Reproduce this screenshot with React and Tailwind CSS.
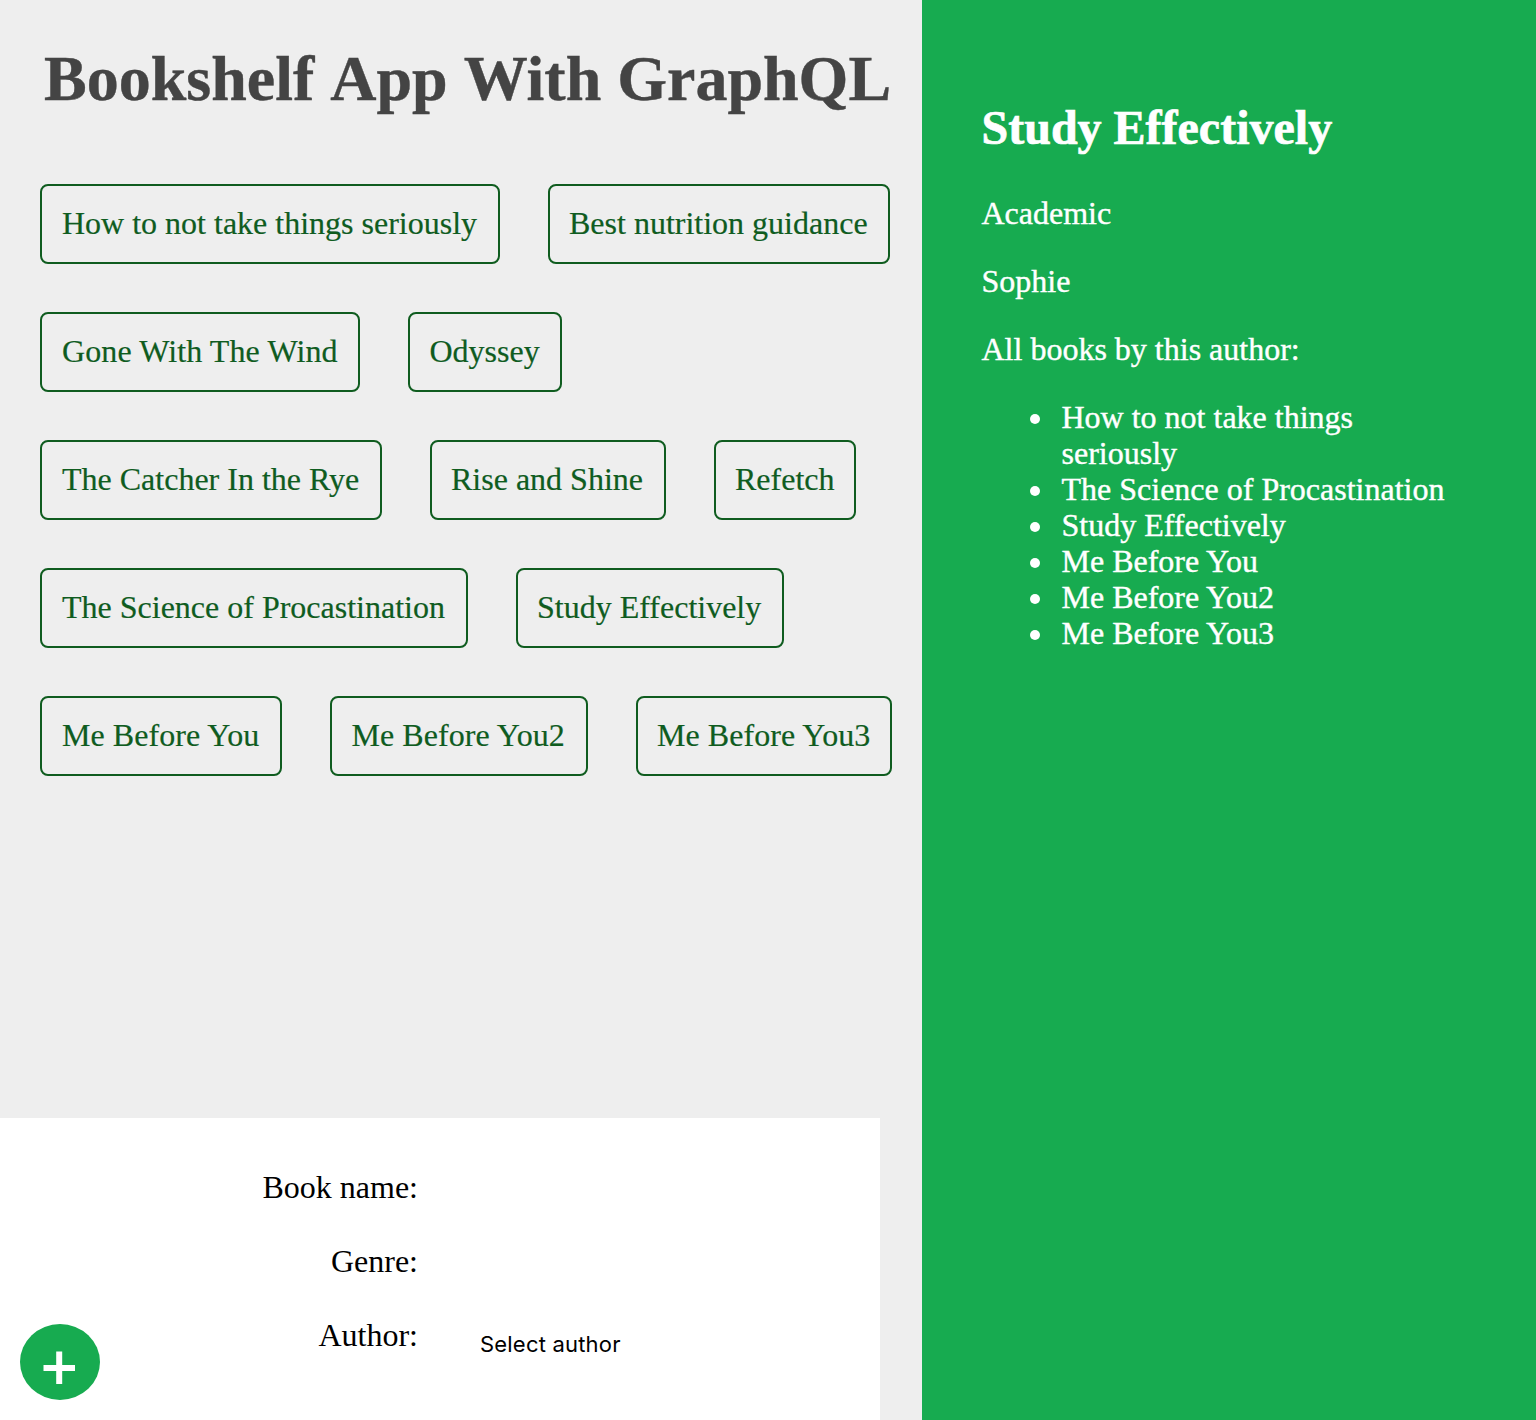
const rows = [
  [["How to not take things seriously", "w-[460px] pl-5"], ["Best nutrition guidance", "w-[342px] pl-[19px]"]],
  [["Gone With The Wind", "w-[320px] pl-5 tracking-[0.1px]"], ["Odyssey", "w-[154px] pl-[19.5px]"]],
  [["The Catcher In the Rye", "w-[342px] pl-5"], ["Rise and Shine", "w-[236px] pl-[19px]"], ["Refetch", "w-[142px] pl-[19px]"]],
  [["The Science of Procastination", "w-[428px] pl-5"], ["Study Effectively", "w-[268px] pl-[19px]"]],
  [["Me Before You", "w-[242px] pl-5 tracking-[0.07px]"], ["Me Before You2", "w-[258px] pl-[19.5px] tracking-[0.07px]"], ["Me Before You3", "w-[256px] pl-[19px] tracking-[0.07px]"]],
];

const authorBooks = [
  "How to not take things seriously",
  "The Science of Procastination",
  "Study Effectively",
  "Me Before You",
  "Me Before You2",
  "Me Before You3",
];

function Field({ label, children }) {
  return (
    <div className="flex h-[74px] shrink-0">
      <label className="w-[418px] text-right leading-[36px]">{label}</label>
      {children}
    </div>
  );
}

export default function App() {
  return (
    <div className="flex h-[1420px] w-[1536px] overflow-hidden bg-[#eeeeee] font-['Liberation_Serif',serif] text-[32px] leading-[36px]">
      <main className="flex w-[922px] shrink-0 flex-col">
        <h1 className="mt-[42px] flex h-[74px] gap-4 pl-[44px] text-[64px] font-bold leading-[74px] whitespace-nowrap text-[#444444] [-webkit-text-stroke:0.4px_#444444]">
          <span>Bookshelf</span>
          <span>App</span>
          <span>With</span>
          <span>GraphQL</span>
        </h1>
        <ul className="mt-[68px] flex flex-col gap-12 pl-10">
          {rows.map((row, i) => (
            <li key={i} className="flex gap-12">
              {row.map(([name, layout]) => (
                <button
                  key={name}
                  className={`${layout} h-20 rounded-lg border-2 border-[#0f5c1f] pb-[2px] text-left leading-[36px] whitespace-nowrap text-[#0f5c1f] [-webkit-text-stroke:0.2px_#0f5c1f]`}
                >
                  {name}
                </button>
              ))}
            </li>
          ))}
        </ul>
        <form className="mt-auto flex h-[302px] w-[880px] flex-col bg-white pt-[51px] text-black">
          <Field label="Book name:" />
          <Field label="Genre:" />
          <Field label="Author:">
            <span className="mt-[5px] ml-[62px] font-[Inter,sans-serif] text-[22px] leading-[44px] tracking-[0.2px]">
              Select author
            </span>
          </Field>
          <button
            type="button"
            aria-label="Add book"
            className="-mt-[67px] ml-5 h-[76px] w-20 shrink-0 rounded-[50%] bg-[#17ab50]"
          >
            <svg viewBox="0 0 80 76" className="h-[76px] w-20">
              <path d="M23.5 44H55M39.2 27.5V60" stroke="white" strokeWidth="6" />
            </svg>
          </button>
        </form>
      </main>
      <aside className="w-[614px] bg-[#17ab50] pt-[100px] pl-[59.5px] text-white [-webkit-text-stroke:0.4px_white]">
        <h2 className="text-[48px] font-bold leading-[55px] [-webkit-text-stroke:0.7px_white]">Study Effectively</h2>
        <p className="mt-10">Academic</p>
        <p className="mt-8">Sophie</p>
        <p className="mt-8">All books by this author:</p>
        <ul className="mt-8 w-[494px] pl-20">
          {authorBooks.map((b) => (
            <li key={b} className="flex">
              <span className="mt-[15px] mr-[22px] -ml-8 size-[10px] shrink-0 rounded-full bg-white" />
              <span>{b}</span>
            </li>
          ))}
        </ul>
      </aside>
    </div>
  );
}
